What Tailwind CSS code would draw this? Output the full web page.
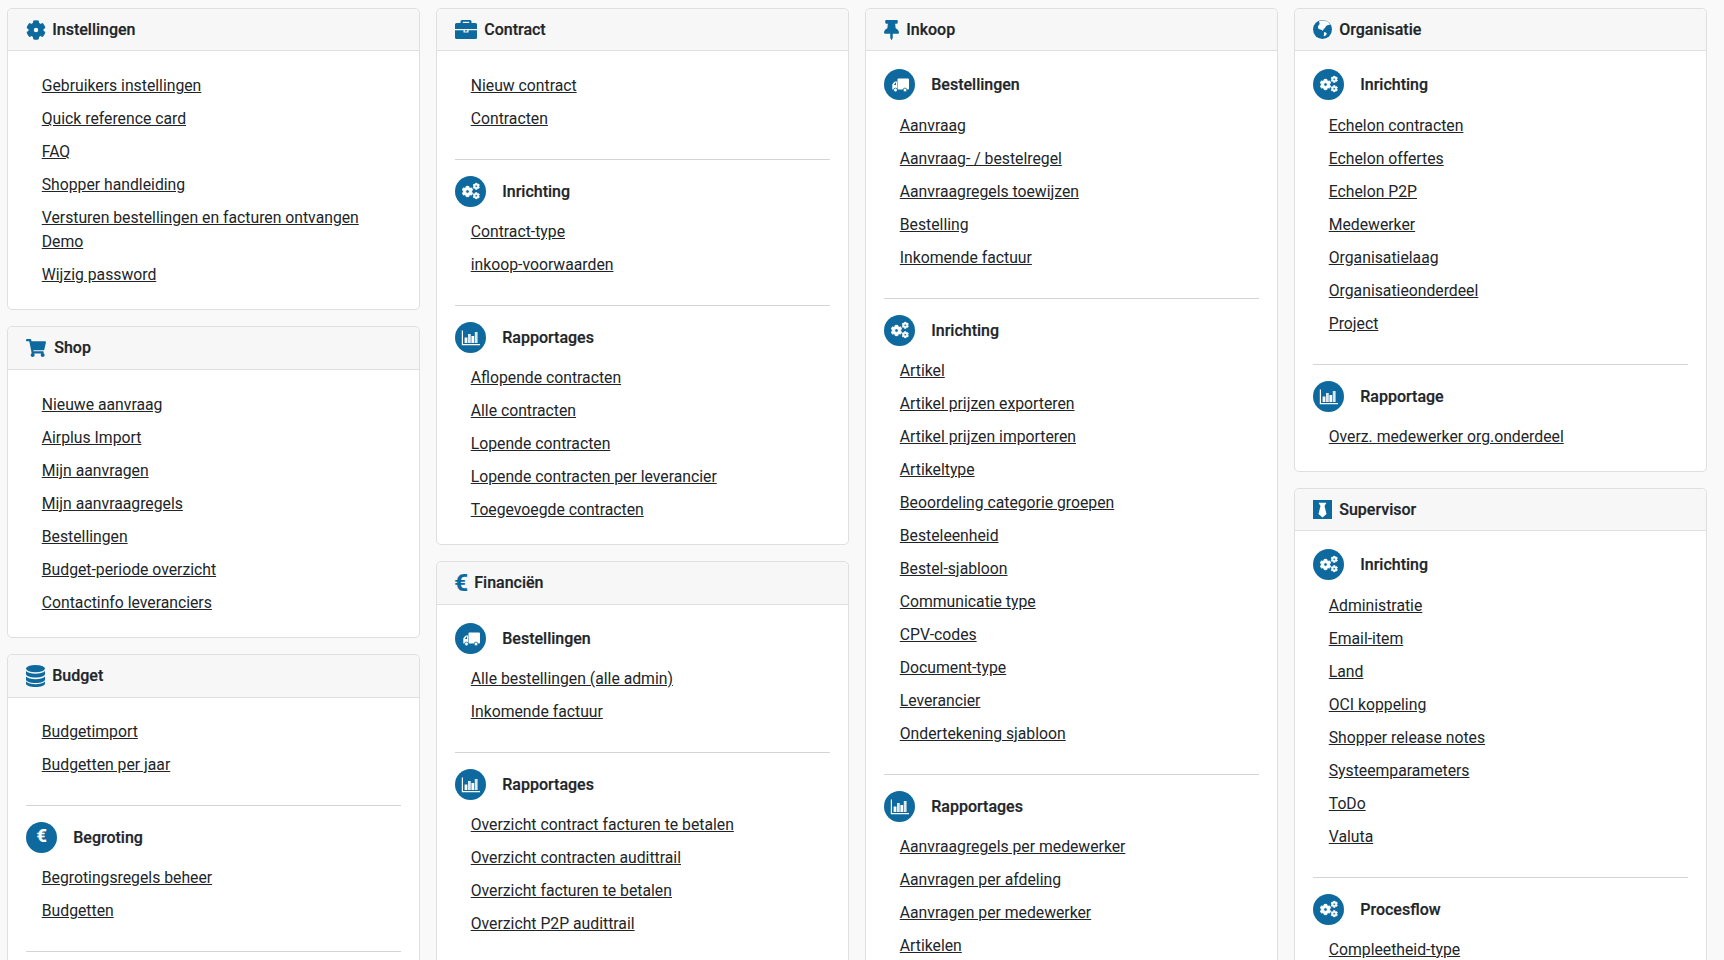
<!doctype html>
<html lang="nl">
<head>
<meta charset="utf-8">
<title>Menu</title>
<script src="https://cdn.jsdelivr.net/npm/@tailwindcss/browser@4"></script>
</head>
<body class="bg-[#f9f9f9] font-['Roboto',sans-serif] text-[15.75px] leading-6 text-[#212529]">
<svg class="hidden" xmlns="http://www.w3.org/2000/svg">
  <symbol id="cog" viewBox="-20 -20 552 552"><path d="M487.4 315.7l-42.6-24.6c4.3-23.2 4.3-47 0-70.2l42.6-24.6c4.9-2.8 7.1-8.6 5.5-14-11.1-35.6-30-67.8-54.7-94.6-3.8-4.1-10-5.1-14.8-2.3L380.8 110c-17.9-15.4-38.5-27.3-60.8-35.1V25.8c0-5.6-3.9-10.5-9.4-11.7-36.7-8.2-74.3-7.8-109.2 0-5.5 1.2-9.4 6.1-9.4 11.7V75c-22.2 7.9-42.8 19.8-60.8 35.1L88.7 85.5c-4.9-2.8-11-1.9-14.8 2.3-24.7 26.7-43.6 58.9-54.7 94.6-1.7 5.4.6 11.2 5.5 14L67.3 221c-4.3 23.2-4.3 47 0 70.2l-42.6 24.6c-4.9 2.8-7.1 8.6-5.5 14 11.1 35.6 30 67.8 54.7 94.6 3.8 4.1 10 5.1 14.8 2.3l42.6-24.6c17.9 15.4 38.5 27.3 60.8 35.1v49.2c0 5.6 3.9 10.5 9.4 11.7 36.7 8.2 74.3 7.8 109.2 0 5.5-1.2 9.4-6.1 9.4-11.7v-49.2c22.2-7.9 42.8-19.8 60.8-35.1l42.6 24.6c4.9 2.8 11 1.9 14.8-2.3 24.7-26.7 43.6-58.9 54.7-94.6 1.5-5.5-.7-11.3-5.6-14.1zM256 336c-44.1 0-80-35.9-80-80s35.9-80 80-80 80 35.9 80 80-35.9 80-80 80z" stroke-width="36" stroke-linejoin="round"/></symbol>
  <symbol id="cogs" viewBox="0 0 31 31"><use href="#cog" x="6.500" y="9.500" width="12" height="12" fill="#fff" stroke="#fff"/><use href="#cog" x="17.500" y="6.500" width="7.500" height="7.500" fill="#fff" stroke="#fff"/><use href="#cog" x="17.500" y="16" width="7.500" height="7.500" fill="#fff" stroke="#fff"/></symbol>
  <symbol id="truck" viewBox="0 0 31 31"><rect x="13.500" y="9.500" width="11.500" height="11" rx="1" fill="#fff"/><path fill="#fff" d="M13 12.500h-1.800c-.4 0-.8.2-1 .5L8.600 15c-.2.2-.3.500-.3.800v4.700H13z"/><path fill="#0e6a9e" d="M12 13.600v2.300H9.900l1.600-2.300z"/><circle cx="11.500" cy="21" r="1.900" fill="#fff" stroke="#0e6a9e" stroke-width=".8"/><circle cx="21" cy="21" r="1.900" fill="#fff" stroke="#0e6a9e" stroke-width=".8"/></symbol>
  <symbol id="chart" viewBox="0 0 31 31"><path fill="#fff" d="M6.800 8.500H8v13.600h17v1.200H6.800z"/><rect x="9.600" y="15.500" width="2.800" height="5.500" fill="#fff"/><rect x="13" y="12" width="2.800" height="9" fill="#dbe9f3"/><rect x="16.400" y="14" width="2.800" height="7" fill="#fff"/><rect x="19.800" y="10" width="2.800" height="11" fill="#dbe9f3"/></symbol>
</svg>
<main class="flex gap-[16.75px] h-screen overflow-hidden pl-[7.25px] items-start">

<!-- Kolom 1 -->
<div class="flex flex-col gap-4 w-[412.25px] shrink-0 pt-2">
  <section class="bg-white border border-[#dfdfdf] rounded-[5px]">
    <header class="flex items-center h-[42px] px-[18px] bg-[#f7f7f7] border-b border-[#dfdfdf] rounded-t-[5px] text-[16px] font-medium [-webkit-text-stroke:0.2px]">
      <svg class="w-[20px] h-[20px] fill-[#0e6a9e] stroke-[#0e6a9e] mr-[6px]"><use href="#cog"/></svg>Instellingen
    </header>
    <div class="px-[18px] pt-[18px] pb-[22px]">
      <ul class="flex flex-col gap-[9px] pl-[15.5px] pt-[5px] underline pr-[30px]">
        <li><a href="#">Gebruikers instellingen</a></li>
        <li><a href="#">Quick reference card</a></li>
        <li><a href="#">FAQ</a></li>
        <li><a href="#">Shopper handleiding</a></li>
        <li><a href="#">Versturen bestellingen en facturen ontvangen Demo</a></li>
        <li><a href="#">Wijzig password</a></li>
      </ul>
    </div>
  </section>
  <section class="bg-white border border-[#dfdfdf] rounded-[5px]">
    <header class="flex items-center h-[43px] px-[18px] bg-[#f7f7f7] border-b border-[#dfdfdf] rounded-t-[5px] text-[16px] font-medium [-webkit-text-stroke:0.2px]">
      <svg class="w-[20px] h-[18px] fill-[#0e6a9e] mr-[8px]" viewBox="0 0 576 512"><path d="M528.12 301.319l47.273-208C578.806 78.301 567.391 64 551.99 64H159.208l-9.166-44.81C147.758 8.021 137.93 0 126.529 0H24C10.745 0 0 10.745 0 24v16c0 13.255 10.745 24 24 24h69.883l70.248 343.435C147.325 417.1 136 435.222 136 456c0 30.928 25.072 56 56 56s56-25.072 56-56c0-15.674-6.447-29.835-16.824-40h209.647C430.447 426.165 424 440.326 424 456c0 30.928 25.072 56 56 56s56-25.072 56-56c0-22.172-12.888-41.332-31.579-50.405l5.517-24.276c3.413-15.018-8.002-29.319-23.403-29.319H218.117l-6.545-32h293.145c11.206 0 20.92-7.754 23.403-18.681z"/></svg>Shop
    </header>
    <div class="px-[18px] pt-[18px] pb-[22px]">
      <ul class="flex flex-col gap-[9px] pl-[15.5px] pt-[5px] underline">
        <li><a href="#">Nieuwe aanvraag</a></li>
        <li><a href="#">Airplus Import</a></li>
        <li><a href="#">Mijn aanvragen</a></li>
        <li><a href="#">Mijn aanvraagregels</a></li>
        <li><a href="#">Bestellingen</a></li>
        <li><a href="#">Budget-periode overzicht</a></li>
        <li><a href="#">Contactinfo leveranciers</a></li>
      </ul>
    </div>
  </section>
  <section class="bg-white border border-[#dfdfdf] rounded-[5px]">
    <header class="flex items-center h-[43px] px-[18px] bg-[#f7f7f7] border-b border-[#dfdfdf] rounded-t-[5px] text-[16px] font-medium [-webkit-text-stroke:0.2px]">
      <svg class="w-[19px] h-[22px] fill-[#0e6a9e] mr-[7px]" viewBox="0 0 19 22"><ellipse cx="9.500" cy="3.600" rx="9.500" ry="3.600"/><path d="M0 6v3c0 2 4.300 3.600 9.500 3.600S19 11 19 9V6c-1.800 1.900-5.500 2.700-9.500 2.700S1.800 7.900 0 6z"/><path d="M0 11.500v3c0 2 4.300 3.600 9.500 3.600S19 16.500 19 14.500v-3c-1.800 1.900-5.500 2.700-9.500 2.700S1.800 13.400 0 11.500z"/><path d="M0 16.500v2c0 2 4.300 3.500 9.500 3.500S19 20.500 19 18.500v-2c-1.800 1.900-5.500 2.700-9.500 2.700S1.800 18.400 0 16.500z"/></svg>Budget
    </header>
    <div class="px-[18px] pt-[18px] pb-[22px]">
      <ul class="flex flex-col gap-[9px] pl-[15.5px] pt-[4px] underline">
        <li><a href="#">Budgetimport</a></li>
        <li><a href="#">Budgetten per jaar</a></li>
      </ul>
      <hr class="border-t border-[#d4d4d4] mt-[28px] mb-[16px]">
      <div class="flex items-center h-[31px] mb-[13px] text-[16px] font-medium [-webkit-text-stroke:0.2px]">
        <span class="flex items-center justify-center w-[31px] h-[31px] pb-[3px] rounded-full bg-[#0e6a9e] text-white text-[18px] font-bold mr-[16px]">€</span>Begroting
      </div>
      <ul class="flex flex-col gap-[9px] pl-[15.5px] underline">
        <li><a href="#">Begrotingsregels beheer</a></li>
        <li><a href="#">Budgetten</a></li>
      </ul>
      <hr class="border-t border-[#d4d4d4] mt-[28px] mb-[16px]">
    </div>
  </section>
</div>

<!-- Kolom 2 -->
<div class="flex flex-col gap-4 w-[412.25px] shrink-0 pt-2">
  <section class="bg-white border border-[#dfdfdf] rounded-[5px]">
    <header class="flex items-center h-[42px] px-[18px] bg-[#f7f7f7] border-b border-[#dfdfdf] rounded-t-[5px] text-[16px] font-medium [-webkit-text-stroke:0.2px]">
      <svg class="w-[22px] h-[19px] fill-[#0e6a9e] mr-[7px]" viewBox="0 0 22 19"><path d="M7 0h8a1.500 1.500 0 0 1 1.500 1.500V3h4A1.500 1.500 0 0 1 22 4.500V9H0V4.500A1.500 1.500 0 0 1 1.500 3h4V1.500A1.500 1.500 0 0 1 7 0zm.8 1.700V3h6.400V1.700z"/><path d="M0 10.200h8.500V12.500h5V10.200H22v7.300a1.500 1.500 0 0 1-1.500 1.500h-19A1.500 1.500 0 0 1 0 17.500z"/><rect x="9.800" y="10.200" width="2.400" height="1.300"/></svg>Contract
    </header>
    <div class="px-[18px] pt-[18px] pb-[22px]">
      <ul class="flex flex-col gap-[9px] pl-[15.5px] pt-[5px] underline">
        <li><a href="#">Nieuw contract</a></li>
        <li><a href="#">Contracten</a></li>
      </ul>
      <hr class="border-t border-[#d4d4d4] mt-[28px] mb-[16px]">
      <div class="flex items-center h-[31px] mb-[13px] text-[16px] font-medium [-webkit-text-stroke:0.2px]">
        <span class="w-[31px] h-[31px] rounded-full bg-[#0e6a9e] mr-[16px]"><svg class="w-[31px] h-[31px]"><use href="#cogs"/></svg></span>Inrichting
      </div>
      <ul class="flex flex-col gap-[9px] pl-[15.5px] underline">
        <li><a href="#">Contract-type</a></li>
        <li><a href="#">inkoop-voorwaarden</a></li>
      </ul>
      <hr class="border-t border-[#d4d4d4] mt-[28px] mb-[16px]">
      <div class="flex items-center h-[31px] mb-[13px] text-[16px] font-medium [-webkit-text-stroke:0.2px]">
        <span class="w-[31px] h-[31px] rounded-full bg-[#0e6a9e] mr-[16px]"><svg class="w-[31px] h-[31px]"><use href="#chart"/></svg></span>Rapportages
      </div>
      <ul class="flex flex-col gap-[9px] pl-[15.5px] underline">
        <li><a href="#">Aflopende contracten</a></li>
        <li><a href="#">Alle contracten</a></li>
        <li><a href="#">Lopende contracten</a></li>
        <li><a href="#">Lopende contracten per leverancier</a></li>
        <li><a href="#">Toegevoegde contracten</a></li>
      </ul>
    </div>
  </section>
  <section class="bg-white border border-[#dfdfdf] rounded-[5px]">
    <header class="flex items-center h-[43px] px-[18px] bg-[#f7f7f7] border-b border-[#dfdfdf] rounded-t-[5px] text-[16px] font-medium [-webkit-text-stroke:0.2px]">
      <span class="text-[#0e6a9e] text-[24px] font-bold w-[13px] mr-[7px] leading-none -ml-[1px]">€</span>Financiën
    </header>
    <div class="px-[18px] pt-[18px] pb-[40px]">
      <div class="flex items-center h-[31px] mb-[13px] text-[16px] font-medium [-webkit-text-stroke:0.2px]">
        <span class="w-[31px] h-[31px] rounded-full bg-[#0e6a9e] mr-[16px]"><svg class="w-[31px] h-[31px]"><use href="#truck"/></svg></span>Bestellingen
      </div>
      <ul class="flex flex-col gap-[9px] pl-[15.5px] underline">
        <li><a href="#">Alle bestellingen (alle admin)</a></li>
        <li><a href="#">Inkomende factuur</a></li>
      </ul>
      <hr class="border-t border-[#d4d4d4] mt-[28px] mb-[16px]">
      <div class="flex items-center h-[31px] mb-[13px] text-[16px] font-medium [-webkit-text-stroke:0.2px]">
        <span class="w-[31px] h-[31px] rounded-full bg-[#0e6a9e] mr-[16px]"><svg class="w-[31px] h-[31px]"><use href="#chart"/></svg></span>Rapportages
      </div>
      <ul class="flex flex-col gap-[9px] pl-[15.5px] underline">
        <li><a href="#">Overzicht contract facturen te betalen</a></li>
        <li><a href="#">Overzicht contracten audittrail</a></li>
        <li><a href="#">Overzicht facturen te betalen</a></li>
        <li><a href="#">Overzicht P2P audittrail</a></li>
      </ul>
    </div>
  </section>
</div>

<!-- Kolom 3 -->
<div class="flex flex-col gap-4 w-[412.25px] shrink-0 pt-2">
  <section class="bg-white border border-[#dfdfdf] rounded-[5px]">
    <header class="flex items-center h-[42px] px-[18px] bg-[#f7f7f7] border-b border-[#dfdfdf] rounded-t-[5px] text-[16px] font-medium [-webkit-text-stroke:0.2px]">
      <svg class="w-[15px] h-[20px] fill-[#0e6a9e] mr-[7px]" viewBox="0 0 384 512"><path d="M298.028 214.267L285.793 96H328c13.255 0 24-10.745 24-24V24c0-13.255-10.745-24-24-24H56C42.745 0 32 10.745 32 24v48c0 13.255 10.745 24 24 24h42.207L85.972 214.267C37.465 236.82 0 277.261 0 328c0 13.255 10.745 24 24 24h136v104.007c0 1.242.289 2.467.845 3.578l24 48c2.941 5.882 11.364 5.893 14.311 0l24-48a8.008 8.008 0 0 0 .845-3.578V352h136c13.255 0 24-10.745 24-24-.001-51.183-37.983-91.42-85.973-113.733z"/></svg>Inkoop
    </header>
    <div class="px-[18px] pt-[18px] pb-[22px]">
      <div class="flex items-center h-[31px] mb-[14px] text-[16px] font-medium [-webkit-text-stroke:0.2px]">
        <span class="w-[31px] h-[31px] rounded-full bg-[#0e6a9e] mr-[16px]"><svg class="w-[31px] h-[31px]"><use href="#truck"/></svg></span>Bestellingen
      </div>
      <ul class="flex flex-col gap-[9px] pl-[15.5px] underline">
        <li><a href="#">Aanvraag</a></li>
        <li><a href="#">Aanvraag- / bestelregel</a></li>
        <li><a href="#">Aanvraagregels toewijzen</a></li>
        <li><a href="#">Bestelling</a></li>
        <li><a href="#">Inkomende factuur</a></li>
      </ul>
      <hr class="border-t border-[#d4d4d4] mt-[28px] mb-[16px]">
      <div class="flex items-center h-[31px] mb-[13px] text-[16px] font-medium [-webkit-text-stroke:0.2px]">
        <span class="w-[31px] h-[31px] rounded-full bg-[#0e6a9e] mr-[16px]"><svg class="w-[31px] h-[31px]"><use href="#cogs"/></svg></span>Inrichting
      </div>
      <ul class="flex flex-col gap-[9px] pl-[15.5px] underline">
        <li><a href="#">Artikel</a></li>
        <li><a href="#">Artikel prijzen exporteren</a></li>
        <li><a href="#">Artikel prijzen importeren</a></li>
        <li><a href="#">Artikeltype</a></li>
        <li><a href="#">Beoordeling categorie groepen</a></li>
        <li><a href="#">Besteleenheid</a></li>
        <li><a href="#">Bestel-sjabloon</a></li>
        <li><a href="#">Communicatie type</a></li>
        <li><a href="#">CPV-codes</a></li>
        <li><a href="#">Document-type</a></li>
        <li><a href="#">Leverancier</a></li>
        <li><a href="#">Ondertekening sjabloon</a></li>
      </ul>
      <hr class="border-t border-[#d4d4d4] mt-[28px] mb-[16px]">
      <div class="flex items-center h-[31px] mb-[13px] text-[16px] font-medium [-webkit-text-stroke:0.2px]">
        <span class="w-[31px] h-[31px] rounded-full bg-[#0e6a9e] mr-[16px]"><svg class="w-[31px] h-[31px]"><use href="#chart"/></svg></span>Rapportages
      </div>
      <ul class="flex flex-col gap-[9px] pl-[15.5px] underline">
        <li><a href="#">Aanvraagregels per medewerker</a></li>
        <li><a href="#">Aanvragen per afdeling</a></li>
        <li><a href="#">Aanvragen per medewerker</a></li>
        <li><a href="#">Artikelen</a></li>
      </ul>
    </div>
  </section>
</div>

<!-- Kolom 4 -->
<div class="flex flex-col gap-4 w-[412.25px] shrink-0 pt-2">
  <section class="bg-white border border-[#dfdfdf] rounded-[5px]">
    <header class="flex items-center h-[42px] px-[18px] bg-[#f7f7f7] border-b border-[#dfdfdf] rounded-t-[5px] text-[16px] font-medium [-webkit-text-stroke:0.2px]">
      <svg class="w-[19px] h-[19px] mr-[7px]" viewBox="0 0 19 19"><circle cx="9.500" cy="9.500" r="9.500" fill="#0e6a9e"/><path fill="#fff" d="M6 1.200c2-.8 5.800-.9 8 .2 1.400.7 2.500 1.800 3.200 3.100-.9.600-2.700.5-3.700 1.200-1 .7-.9 1.900-1.900 2.600-1.100.7-1.300 1.600-1.700 2.500-.7-.3-1.300-1.300-2.400-1.300-1.200 0-2.400-.6-2.600-1.900C4.700 5.800 6.200 5 6.500 3.900 6.700 3 6.200 2 6 1.200z"/><path fill="#fff" d="M11 12.300c1.100-.3 2.100.2 2.600 1 .4.800-.4 1.600-1.100 2.100-.5.400-1 1-1.600.8-.5-.9.300-1.500.2-2.300-.1-.6-.3-1.100-.1-1.600z"/></svg>Organisatie
    </header>
    <div class="px-[18px] pt-[18px] pb-[22px]">
      <div class="flex items-center h-[31px] mb-[14px] text-[16px] font-medium [-webkit-text-stroke:0.2px]">
        <span class="w-[31px] h-[31px] rounded-full bg-[#0e6a9e] mr-[16px]"><svg class="w-[31px] h-[31px]"><use href="#cogs"/></svg></span>Inrichting
      </div>
      <ul class="flex flex-col gap-[9px] pl-[15.5px] underline">
        <li><a href="#">Echelon contracten</a></li>
        <li><a href="#">Echelon offertes</a></li>
        <li><a href="#">Echelon P2P</a></li>
        <li><a href="#">Medewerker</a></li>
        <li><a href="#">Organisatielaag</a></li>
        <li><a href="#">Organisatieonderdeel</a></li>
        <li><a href="#">Project</a></li>
      </ul>
      <hr class="border-t border-[#d4d4d4] mt-[28px] mb-[16px]">
      <div class="flex items-center h-[31px] mb-[13px] text-[16px] font-medium [-webkit-text-stroke:0.2px]">
        <span class="w-[31px] h-[31px] rounded-full bg-[#0e6a9e] mr-[16px]"><svg class="w-[31px] h-[31px]"><use href="#chart"/></svg></span>Rapportage
      </div>
      <ul class="flex flex-col gap-[9px] pl-[15.5px] underline">
        <li><a href="#">Overz. medewerker org.onderdeel</a></li>
      </ul>
    </div>
  </section>
  <section class="bg-white border border-[#dfdfdf] rounded-[5px]">
    <header class="flex items-center h-[42px] px-[18px] bg-[#f7f7f7] border-b border-[#dfdfdf] rounded-t-[5px] text-[16px] font-medium [-webkit-text-stroke:0.2px]">
      <svg class="w-[19px] h-[19px] mr-[7px]" viewBox="0 0 19 19"><rect width="19" height="19" fill="#0e6a9e"/><path fill="#fff" d="M5.500 2.800h8l-2 3.200 2 8-4 3.500-4-3.500 2-8z"/></svg>Supervisor
    </header>
    <div class="px-[18px] pt-[18px] pb-[22px]">
      <div class="flex items-center h-[31px] mb-[14px] text-[16px] font-medium [-webkit-text-stroke:0.2px]">
        <span class="w-[31px] h-[31px] rounded-full bg-[#0e6a9e] mr-[16px]"><svg class="w-[31px] h-[31px]"><use href="#cogs"/></svg></span>Inrichting
      </div>
      <ul class="flex flex-col gap-[9px] pl-[15.5px] underline">
        <li><a href="#">Administratie</a></li>
        <li><a href="#">Email-item</a></li>
        <li><a href="#">Land</a></li>
        <li><a href="#">OCI koppeling</a></li>
        <li><a href="#">Shopper release notes</a></li>
        <li><a href="#">Systeemparameters</a></li>
        <li><a href="#">ToDo</a></li>
        <li><a href="#">Valuta</a></li>
      </ul>
      <hr class="border-t border-[#d4d4d4] mt-[28px] mb-[16px]">
      <div class="flex items-center h-[31px] mb-[13px] text-[16px] font-medium [-webkit-text-stroke:0.2px]">
        <span class="w-[31px] h-[31px] rounded-full bg-[#0e6a9e] mr-[16px]"><svg class="w-[31px] h-[31px]"><use href="#cogs"/></svg></span>Procesflow
      </div>
      <ul class="flex flex-col gap-[9px] pl-[15.5px] underline">
        <li><a href="#">Compleetheid-type</a></li>
      </ul>
    </div>
  </section>
</div>
</main>
</body>
</html>
